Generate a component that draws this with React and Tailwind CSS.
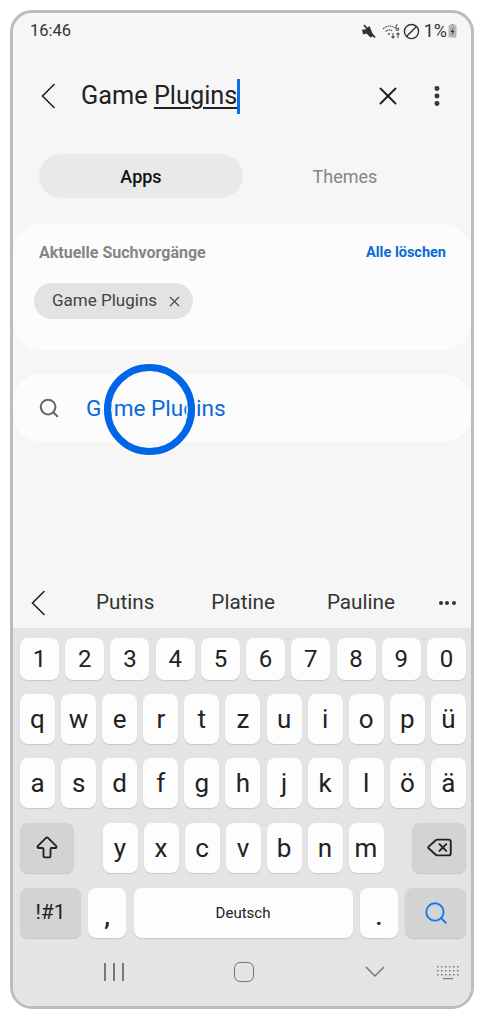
import React from 'react';
import { X, EllipsisVertical, Search, Delete, ArrowBigUp, Ban } from 'lucide-react';

const digits = ['1', '2', '3', '4', '5', '6', '7', '8', '9', '0'];
const rowTop = ['q', 'w', 'e', 'r', 't', 'z', 'u', 'i', 'o', 'p', 'ü'];
const rowMid = ['a', 's', 'd', 'f', 'g', 'h', 'j', 'k', 'l', 'ö', 'ä'];
const rowLow = ['y', 'x', 'c', 'v', 'b', 'n', 'm'];

const Key = ({ children, className = '' }) => (
  <div className={`flex items-center justify-center rounded-[8px] bg-[#fdfdfd] shadow-[0_1px_1px_#c8c8c8] text-[#222] ${className}`}>
    {children}
  </div>
);

const FnKey = ({ children, className = '' }) => (
  <div className={`flex items-center justify-center rounded-[8px] bg-[#d3d3d3] shadow-[0_1px_1px_#c4c4c4] text-[#222] ${className}`}>
    {children}
  </div>
);

const Back = ({ className = '' }) => (
  <svg width="14" height="26" viewBox="0 0 14 26" fill="none" stroke="#222" strokeWidth="1.600" strokeLinecap="round" className={className}>
    <path d="M13 1.500 1.500 13 13 24.500" />
  </svg>
);

const App = () => {
  return (
    <div className="w-[486px] h-[1020px] bg-white pt-[10px] pl-[10px] font-['Roboto',sans-serif]">
      <div className="relative flex flex-col w-[464px] h-[999px] overflow-hidden rounded-[22px] border-[3px] border-[#bcbcbc] bg-[#f6f6f6]">
        {/* status bar */}
        <div className="flex items-center justify-between h-[36px] pl-[17px] pr-[14px] text-[#333]">
          <span className="text-[16.500px]">16:46</span>
          <div className="flex items-center">
            <svg width="16" height="15" viewBox="0 0 16 15" className="mr-[5px]">
              <path d="M1 5.500h3l4.500-3.500 4 10-3 1.500-4-4-3.500 1z" fill="#333" />
              <path d="M3 1l11 12.500" stroke="#333" strokeWidth="1.800" />
            </svg>
            <svg width="20" height="16" viewBox="0 0 20 16" fill="none" stroke="#555" strokeWidth="1.100" className="mr-[1px]">
              <path d="M1 6 Q7 0.500 13 5" strokeDasharray="1.400 0.500" />
              <path d="M3.500 8.500 Q7 5.500 10.500 8" strokeDasharray="1.400 0.500" />
              <circle cx="7" cy="11" r="1" fill="#555" stroke="none" />
              <path d="M11 10v5M9.500 13.500l1.500 1.500 1.500-1.500M16 15v-5M14.500 11.500l1.500-1.500 1.500 1.500" />
              <path d="M15.500 1.500q-2 1-1.500 4t2.500 1.500q1-2-2-2" />
            </svg>
            <Ban size={17} strokeWidth={2} className="mr-[4px] -scale-x-100 text-[#333]" />
            <span className="text-[18px] leading-none">1%</span>
            <svg width="9" height="14" viewBox="0 0 9 14" className="ml-[1px]">
              <rect x="2.500" y="0" width="4" height="2" fill="#aaa" />
              <rect x="0.500" y="1.500" width="8" height="12" rx="1" fill="#b5b5b5" />
              <path d="M5.500 3.500 2.500 8h2l-1 3.500 3-4.500h-2z" fill="#333" />
            </svg>
          </div>
        </div>

        {/* search header */}
        <div className="flex items-center h-[66px] mt-[14px]">
          <Back className="ml-[28px]" />
          <div className="relative flex items-center ml-[26px] text-[25.300px] leading-none text-[#222]">
            <span>Game&nbsp;</span>
            <span className="underline decoration-[1.500px] underline-offset-[3px]">Plugins</span>
            <span className="w-[3px] h-[35px] bg-[#0a6ee6]" />
          </div>
          <X size={30} strokeWidth={1.500} className="ml-auto mr-[21px] text-[#222]" />
          <EllipsisVertical size={26} strokeWidth={2.600} className="mr-[21px] text-[#333]" />
        </div>

        {/* tabs */}
        <div className="flex h-[44px] mt-[25px] ml-[26px] text-[18px]">
          <div className="flex items-center justify-center w-[204px] rounded-full bg-[#e9e9e9] font-medium text-[#111]">Apps</div>
          <div className="flex items-center justify-center w-[204px] text-[#858585]">Themes</div>
        </div>

        {/* recent searches */}
        <div className="mt-[26px] h-[126px] rounded-[28px] bg-[#fcfcfc]">
          <div className="flex items-center justify-between pt-[17px] pl-[26px] pr-[25px] font-bold leading-[24px]">
            <span className="text-[16px] text-[#858585]">Aktuelle Suchvorgänge</span>
            <span className="text-[14.500px] text-[#0a6ad8]">Alle löschen</span>
          </div>
          <div className="flex items-center w-[159px] h-[36px] mt-[18px] ml-[21px] pl-[18px] rounded-full bg-[#e3e3e3] text-[17px] text-[#444]">
            <span>Game Plugins</span>
            <X size={17} strokeWidth={1.500} className="ml-[9px] text-[#444]" />
          </div>
        </div>

        {/* suggestion */}
        <div className="flex items-center mt-[24px] h-[68px] rounded-[28px] bg-[#fcfcfc]">
          <Search size={22} strokeWidth={2.200} className="ml-[25px] text-[#666]" />
          <span className="ml-[26px] mt-[2px] text-[22.600px] text-[#0a6ad8]">Game Plugins</span>
        </div>

        {/* touch indicator */}
        <div className="absolute left-[91px] top-[351px] w-[91px] h-[91px] rounded-full border-[7px] border-[#0066e8] shadow-[0_0_0_1.500px_#fcfcfc,inset_0_0_0_1.500px_#fcfcfc]" />

        {/* word suggestions */}
        <div className="flex items-center h-[42px] mt-auto pb-[8px] text-[#333] text-[20.700px]">
          <Back className="ml-[18px]" />
          <span className="ml-[51px]">Putins</span>
          <span className="ml-[57px]">Platine</span>
          <span className="ml-[52px]">Pauline</span>
          <div className="flex gap-[2.500px] ml-[44px]">
            <span className="w-[4px] h-[4px] rounded-full bg-[#333]" />
            <span className="w-[4px] h-[4px] rounded-full bg-[#333]" />
            <span className="w-[4px] h-[4px] rounded-full bg-[#333]" />
          </div>
        </div>

        {/* keyboard */}
        <div className="flex flex-col h-[378px] bg-[#e4e4e4] pt-[10px] pl-[7px] pr-[5px]">
          <div className="flex justify-between h-[42px] text-[24px]">
            {digits.map((d) => (
              <Key key={d} className="w-[39px]">{d}</Key>
            ))}
          </div>
          <div className="flex justify-between h-[50px] mt-[14px] text-[26px]">
            {rowTop.map((k) => (
              <Key key={k} className="w-[35px]">{k}</Key>
            ))}
          </div>
          <div className="flex justify-between h-[50px] mt-[14px] text-[26px]">
            {rowMid.map((k) => (
              <Key key={k} className="w-[35px]">{k}</Key>
            ))}
          </div>
          <div className="flex justify-between h-[50px] mt-[15px] text-[26px]">
            <FnKey className="w-[54px]">
              <ArrowBigUp size={28} strokeWidth={1.600} />
            </FnKey>
            <div className="flex gap-[6px]">
              {rowLow.map((k) => (
                <Key key={k} className="w-[35px]">{k}</Key>
              ))}
            </div>
            <FnKey className="w-[54px]">
              <Delete size={27} strokeWidth={1.700} className="-mt-[1px]" />
            </FnKey>
          </div>
          <div className="flex justify-between h-[50px] mt-[15px]">
            <FnKey className="w-[61px] text-[21px]">!#1</FnKey>
            <Key className="w-[38px] text-[26px] font-medium pt-[6px]">,</Key>
            <Key className="w-[219px] text-[15px]">Deutsch</Key>
            <Key className="w-[38px] text-[26px] font-medium pt-[6px]">.</Key>
            <FnKey className="w-[61px]">
              <Search size={26} strokeWidth={1.700} className="text-[#0a7af0]" />
            </FnKey>
          </div>

          {/* nav bar */}
          <div className="relative flex-1">
            <div className="absolute left-[84px] top-[25px] flex gap-[7px]">
              <span className="w-[2px] h-[18px] bg-[#777]" />
              <span className="w-[2px] h-[18px] bg-[#777]" />
              <span className="w-[2px] h-[18px] bg-[#777]" />
            </div>
            <div className="absolute left-[214px] top-[24px] w-[20px] h-[20px] rounded-[6px] border-[1.500px] border-[#777]" />
            <svg width="22" height="14" viewBox="0 0 22 14" fill="none" stroke="#777" strokeWidth="1.500" className="absolute left-[344px] top-[27px]">
              <path d="M2 2l9 9 9-9" />
            </svg>
            <svg width="24" height="15" viewBox="0 0 24 15" fill="#777" className="absolute left-[416px] top-[27px]">
              <path d="M1 1h1.500v1.500H1zM5 1h1.500v1.500H5zM9 1h1.500v1.500H9zM13 1h1.500v1.500H13zM17 1h1.500v1.500H17zM21 1h1.500v1.500H21zM1 5h1.500v1.500H1zM5 5h1.500v1.500H5zM9 5h1.500v1.500H9zM13 5h1.500v1.500H13zM17 5h1.500v1.500H17zM21 5h1.500v1.500H21zM1 9h1.500v1.500H1zM5 9h1.500v1.500H5zM9 9h1.500v1.500H9zM13 9h1.500v1.500H13zM17 9h1.500v1.500H17zM21 9h1.500v1.500H21zM7 13h10v1.200H7z" />
            </svg>
          </div>
        </div>
      </div>
    </div>
  );
};

export default App;
